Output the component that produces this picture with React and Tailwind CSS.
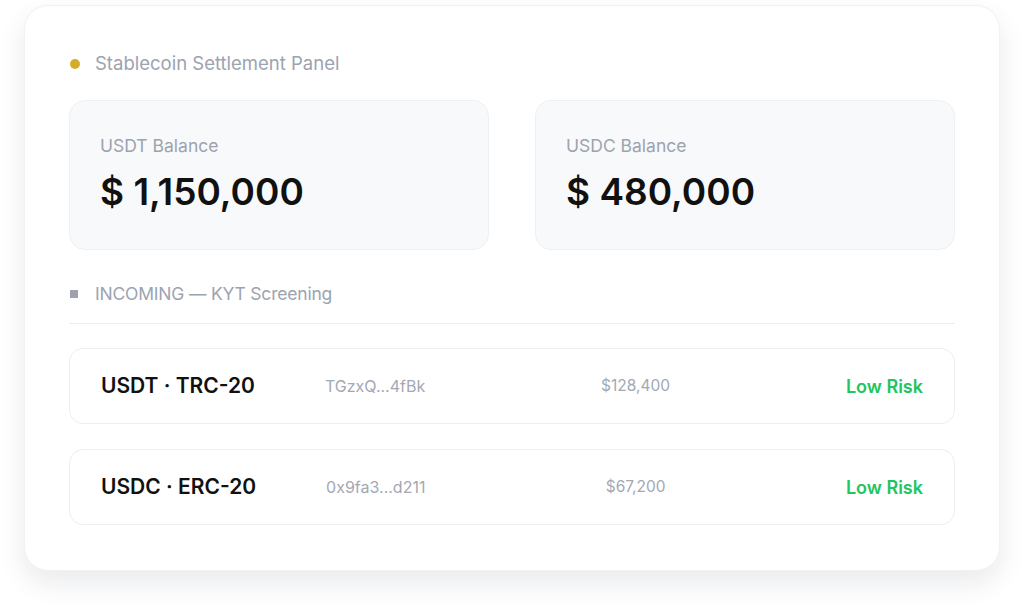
import React from 'react';

const balances = [
  { label: 'USDT Balance', value: '$ 1,150,000' },
  { label: 'USDC Balance', value: '$ 480,000' },
];

const incoming = [
  { name: 'USDT · TRC-20', address: 'TGzxQ...4fBk', amount: '$128,400', risk: 'Low Risk' },
  { name: 'USDC · ERC-20', address: '0x9fa3...d211', amount: '$67,200', risk: 'Low Risk' },
];

const App = () => {
  return (
    <div
      className="w-[1024px] h-[612px] bg-white pt-[5px] pl-[24px]"
      style={{ fontFamily: 'Inter, "Noto Sans", sans-serif' }}
    >
      <div className="w-[976px] h-[566px] bg-white rounded-[24px] border border-[#f1f2f4] shadow-[0_12px_28px_rgba(15,23,42,0.09)] px-[44px] pt-[44px]">
        {/* Panel title */}
        <div className="flex items-center h-[28px]">
          <span className="w-[10px] h-[10px] rounded-full bg-[#d4ac2b] ml-[1px]" />
          <span className="ml-[15px] text-[18.5px] text-[#9ca3af]">
            Stablecoin Settlement Panel
          </span>
        </div>

        {/* Balance cards */}
        <div className="mt-[22px] grid grid-cols-2 gap-[46px]">
          {balances.map((b) => (
            <div
              key={b.label}
              className="h-[150px] rounded-[16px] bg-[#f8f9fb] border border-[#eef0f3] pl-[30px] pt-[33px]"
            >
              <div className="h-[24px] leading-[24px] text-[17.5px] text-[#9ca3af]">{b.label}</div>
              <div className="mt-[12px] h-[44px] leading-[44px] text-[37px] font-semibold text-[#111111]">
                {b.value}
              </div>
            </div>
          ))}
        </div>

        {/* Incoming section */}
        <div className="mt-[30px] flex items-center h-[28px]">
          <span className="w-[8px] h-[8px] bg-[#9ca3af] ml-[1px]" />
          <span className="ml-[17px] text-[17.5px] text-[#9ca3af] tracking-[-0.2px]">INCOMING — KYT Screening</span>
        </div>
        <div className="mt-[15px] h-px bg-[#eceef1]" />

        <div className="mt-[24px] flex flex-col gap-[25px]">
          {incoming.map((row) => (
            <div
              key={row.name}
              className="h-[76px] rounded-[14px] border border-[#eceef1] bg-white flex items-center gap-[70px] pl-[31px] pr-[31px]"
            >
              <span className="text-[21px] font-semibold text-[#111111] whitespace-nowrap">{row.name}</span>
              <span className="text-[16px] text-[#a3a8b3] whitespace-nowrap">{row.address}</span>
              <span className="flex-1 text-center text-[15.5px] text-[#a3a8b3] whitespace-nowrap">{row.amount}</span>
              <span className="text-[18px] font-semibold text-[#22c55e] whitespace-nowrap">{row.risk}</span>
            </div>
          ))}
        </div>
      </div>
    </div>
  );
};

export default App;
